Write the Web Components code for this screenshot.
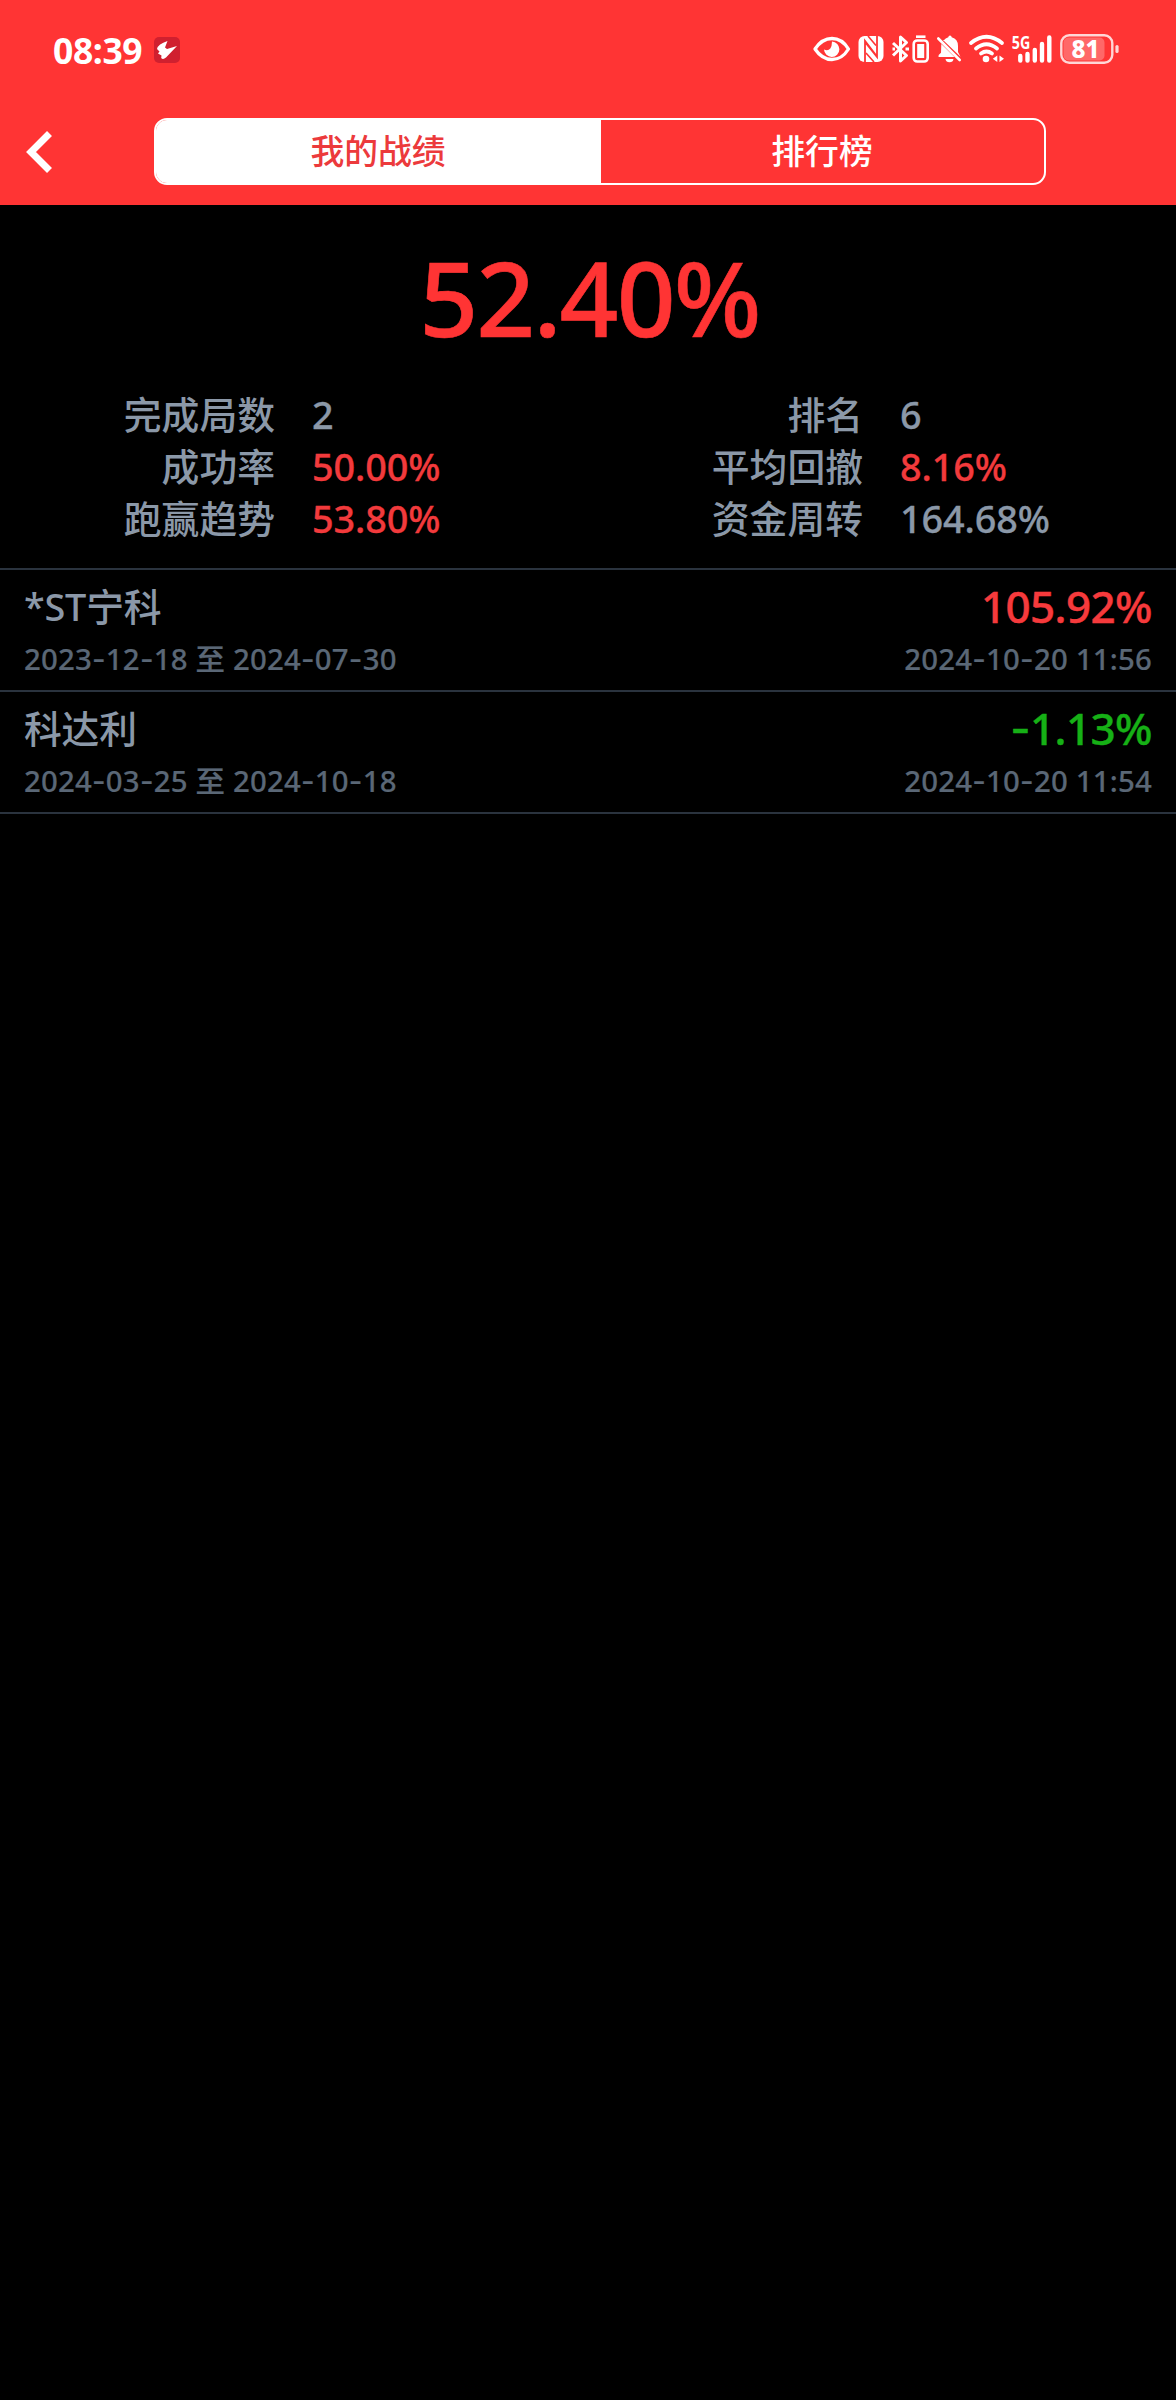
<!DOCTYPE html>
<html lang="zh-CN">
<head>
<meta charset="utf-8">
<title>我的战绩</title>
<style>
    html, body {
        margin: 0;
        background: #000;
    }

    body {
        width: 1176px;
        min-height: 2400px;
        font-family: "Noto Sans", "Noto Sans CJK SC", sans-serif;
        font-weight: 500;
        color: #8b98a8;
    }
</style>
</head>
<body>
<record-page></record-page>

<script>
function define(name, html, setup) {
    const template = document.createElement("template");
    template.innerHTML = html;

    customElements.define(name, class extends HTMLElement {
        constructor() {
            super();
            this.attachShadow({ mode: "open" });
            this.shadowRoot.appendChild(template.content.cloneNode(true));
        }

        connectedCallback() {
            if (setup) setup(this, this.shadowRoot);
        }
    });
}

define("status-bar", `
<style>
    :host {
        display: flex;
        height: 98px;
        box-sizing: border-box;
        padding: 33px 57px 0 53px;
        justify-content: space-between;
        align-items: flex-start;
        color: #fff;
    }

    .left, .right {
        display: flex;
        height: 34px;
        align-items: center;
    }

    .time {
        width: 101px;
        font-size: 35.5px;
        line-height: 33px;
        font-weight: 700;
        letter-spacing: -0.4px;
    }

    svg {
        display: block;
        flex: none;
        overflow: visible;
    }
</style>
<div class="left">
  <div class="time">08:39</div>
  <svg width="26" height="26" viewBox="0 0 26 26">
    <rect width="26" height="26" rx="5" fill="#d0202f"/>
    <path d="M13.5 4 L11 10.5 L13 12 L23 9 L12 20.5 Q9 23 7.2 21 L7.5 18.5 L4 16.5 L5.5 14.5 L3 12 Q4 7 13.5 4Z" fill="#fff"/>
  </svg>
</div>
<div class="right">
  <!-- eye -->
  <svg width="45" height="34" viewBox="813 33 45 34" fill="none" stroke="#fff" stroke-width="3.3">
    <path d="M815 49 Q822 38.5 832 38.5 Q842 38.5 848.5 49 Q842 59.5 832 59.5 Q822 59.5 815 49Z" stroke-linejoin="round"/>
    <path d="M832 41.5 A7.7 7.7 0 1 1 824 49.5 Q828 51.5 830.3 48.5 Q832 46 832 41.5Z" fill="#fff" stroke="none"/>
  </svg>
  <!-- nfc -->
  <svg width="34" height="34" viewBox="858 33 34 34">
    <rect x="858.5" y="36" width="25" height="26" rx="6" fill="#fff"/>
    <path d="M865 62 V41 L877 56.5 M877 36 V57 L865 42" fill="none" stroke="#ff3434" stroke-width="1.8"/>
    <path d="M868 36 L876 45.5 M866 53 L874 62" fill="none" stroke="#ff3434" stroke-width="1.6"/>
  </svg>
  <!-- bluetooth and its battery -->
  <svg width="45" height="34" viewBox="892 33 45 34" fill="none" stroke="#fff">
    <path d="M893 43 L906.5 55.5 L900.5 61 V37 L906.5 42.5 L893 55.5" stroke-width="3" stroke-linejoin="round"/>
    <path d="M892.5 49 H895 M905.5 49 H909" stroke-width="3"/>
    <rect x="913.7" y="40.5" width="14" height="21" rx="3.5" stroke-width="2.6"/>
    <path d="M916 36.7 H925.5" stroke-width="2.6"/>
    <rect x="917.2" y="44" width="7" height="14" fill="#fff" stroke="none"/>
  </svg>
  <!-- muted bell -->
  <svg width="32" height="34" viewBox="937 33 32 34">
    <path d="M943 41 Q945.8 37.7 948.3 37.2 Q948.5 35.5 950 35.5 Q951.5 35.5 951.7 37.2 Q958 38.8 958 46 V52 L960.5 56.8 L943 40Z M941.3 44 L954.5 57 H938.5 Q938 54.8 941 52.8Z" fill="#fff"/>
    <path d="M945.5 59 H953.5 Q953 62.3 949.5 62.3 Q946 62.3 945.5 59Z" fill="#fff"/>
    <path d="M938.3 38.5 L959.7 60" stroke="#fff" stroke-width="2.6" stroke-linecap="round"/>
  </svg>
  <!-- wifi -->
  <svg width="43" height="34" viewBox="969 33 43 34" fill="none" stroke="#fff" stroke-width="3.8" stroke-linecap="round">
    <path d="M971 43 Q986.5 30.5 1002 43 M976 48.5 Q986.5 40 997 48.5 M981 53.5 Q986.5 49.5 992 53.5"/>
    <circle cx="986" cy="59" r="3.3" fill="#fff" stroke="none"/>
    <path d="M997.3 55.5 V62 L992.8 58.8Z M999.5 55.5 V62 L1004 58.8Z" fill="#fff" stroke="none"/>
  </svg>
  <!-- mobile signal -->
  <svg width="48" height="34" viewBox="1012 33 48 34">
    <text x="1011.8" y="48.8" textLength="18.5" lengthAdjust="spacingAndGlyphs" font-size="17.5" font-weight="700" fill="#fff">5G</text>
    <path d="M1020.3 56 V60.5 M1027.5 54 V60.5 M1034.8 50 V60.5 M1042 44 V60.5 M1049.3 37.5 V60.5" stroke="#fff" stroke-width="4.4" stroke-linecap="round"/>
  </svg>
  <!-- phone battery -->
  <svg width="59" height="34" viewBox="1060 33 59 34">
    <rect x="1063.5" y="37.5" width="41" height="23" rx="5" fill="#ff6868"/>
    <rect x="1061.3" y="35.3" width="51" height="27.4" rx="8" fill="none" stroke="#ffd6d6" stroke-width="2.4"/>
    <path d="M1117 46.5 V51.5" stroke="#ffd6d6" stroke-width="3.2" stroke-linecap="round"/>
    <text x="1071.5" y="57.8" textLength="28" lengthAdjust="spacingAndGlyphs" font-size="25" font-weight="800" fill="#fff">81</text>
  </svg>
</div>
`);

define("nav-bar", `
<style>
    :host {
        display: flex;
        height: 107px;
        box-sizing: border-box;
        padding: 20px 130px 0 24px;
        align-items: flex-start;
        justify-content: space-between;
    }

    .back {
        height: 67px;
        display: flex;
        align-items: center;
    }

    .tabs {
        display: flex;
        width: 892px;
        height: 67px;
        box-sizing: border-box;
        border: 2px solid #fff;
        border-radius: 13px;
        overflow: hidden;
    }
</style>
<div class="back">
  <svg width="32" height="44" viewBox="24 130 32 44">
    <path d="M49.5 133.5 L31 152 L49.5 170.5" fill="none" stroke="#fff" stroke-width="7"/>
  </svg>
</div>
<div class="tabs"><slot></slot></div>
`);

define("nav-tab", `
<style>
    :host {
        display: flex;
        flex: 1;
        align-items: center;
        justify-content: center;
        color: #fff;
        font-size: 33.8px;
        line-height: 59px;
        height: 59px;
        padding: 0 1px 4px 0;
        font-family: "Noto Sans CJK SC", sans-serif;
    }

    :host([active]) {
        flex: 0 0 444px;
        background: #fff;
        color: #ec3a3c;
    }
</style>
<slot></slot>
`);

define("total-rate", `
<style>
    :host {
        display: block;
        height: 185px;
        box-sizing: border-box;
        padding: 21px 0 0 3px;
        text-align: center;
        color: #ff3434;
        font-size: 103px;
        line-height: 142px;
        letter-spacing: -1.8px;
        -webkit-text-stroke: 0.6px currentColor;
    }
</style>
<slot></slot>
`);

define("stat-item", `
<style>
    :host {
        display: flex;
        gap: 36px;
        height: 52px;
        font-size: 37.8px;
        line-height: 50px;
        white-space: nowrap;
    }

    .label {
        width: 275px;
        padding-right: 1px;
        line-height: 45px;
        text-align: right;
        font-family: "Noto Sans CJK SC", sans-serif;
    }

    .value {
        letter-spacing: -0.1px;
        -webkit-text-stroke: 0.3px currentColor;
    }

    :host([up]) .value {
        color: #f23a3c;
    }
</style>
<div class="label"></div>
<div class="value"><slot></slot></div>
`, (el, root) => {
    root.querySelector(".label").textContent = el.getAttribute("label");
});

define("stat-grid", `
<style>
    :host {
        display: grid;
        grid-template-columns: 588px 588px;
        height: 178px;
        align-content: start;
    }
</style>
<slot></slot>
`);

define("game-row", `
<style>
    :host {
        display: block;
        height: 122px;
        box-sizing: border-box;
        border-top: 2px solid #2a333e;
        padding: 10px 24px 0;
    }

    .line {
        display: flex;
        justify-content: space-between;
        height: 54px;
        line-height: 53px;
        font-size: 37.8px;
    }

    .name {
        letter-spacing: -0.2px;
    }

    .rate {
        font-size: 44px;
        letter-spacing: -0.6px;
        color: #f63a3c;
        -webkit-text-stroke: 0.4px currentColor;
    }

    :host([down]) .rate {
        color: #16b016;
    }

    .dates {
        height: 50px;
        line-height: 51px;
        font-size: 29.4px;
        letter-spacing: 0.2px;
        color: #5a6776;
        -webkit-text-stroke: 0.2px currentColor;
    }

    /* a wider hyphen than the text face has */
    .dash {
        font-family: Inter, sans-serif;
    }
</style>
<div class="line">
  <div class="name"><slot></slot></div>
  <div class="rate"></div>
</div>
<div class="line dates">
  <div class="range"></div>
  <div class="played"></div>
</div>
`, (el, root) => {
    for (const key of ["rate", "range", "played"]) {
        const text = el.getAttribute(key);
        root.querySelector("." + key).innerHTML = text.replace(/-/g, '<span class="dash">-</span>');
    }
});

define("record-page", `
<style>
    :host {
        display: block;
    }

    header {
        background: #ff3434;
        height: 205px;
    }

    .games {
        border-bottom: 2px solid #2a333e;
    }
</style>
<header>
  <status-bar></status-bar>
  <nav-bar>
    <nav-tab active>我的战绩</nav-tab>
    <nav-tab>排行榜</nav-tab>
  </nav-bar>
</header>
<total-rate>52.40%</total-rate>
<stat-grid>
  <stat-item label="完成局数">2</stat-item>
  <stat-item label="排名">6</stat-item>
  <stat-item label="成功率" up>50.00%</stat-item>
  <stat-item label="平均回撤" up>8.16%</stat-item>
  <stat-item label="跑赢趋势" up>53.80%</stat-item>
  <stat-item label="资金周转">164.68%</stat-item>
</stat-grid>
<div class="games">
  <game-row rate="105.92%" range="2023-12-18 至 2024-07-30" played="2024-10-20 11:56">*ST宁科</game-row>
  <game-row down rate="-1.13%" range="2024-03-25 至 2024-10-18" played="2024-10-20 11:54">科达利</game-row>
</div>
`);
</script>
</body>
</html>
